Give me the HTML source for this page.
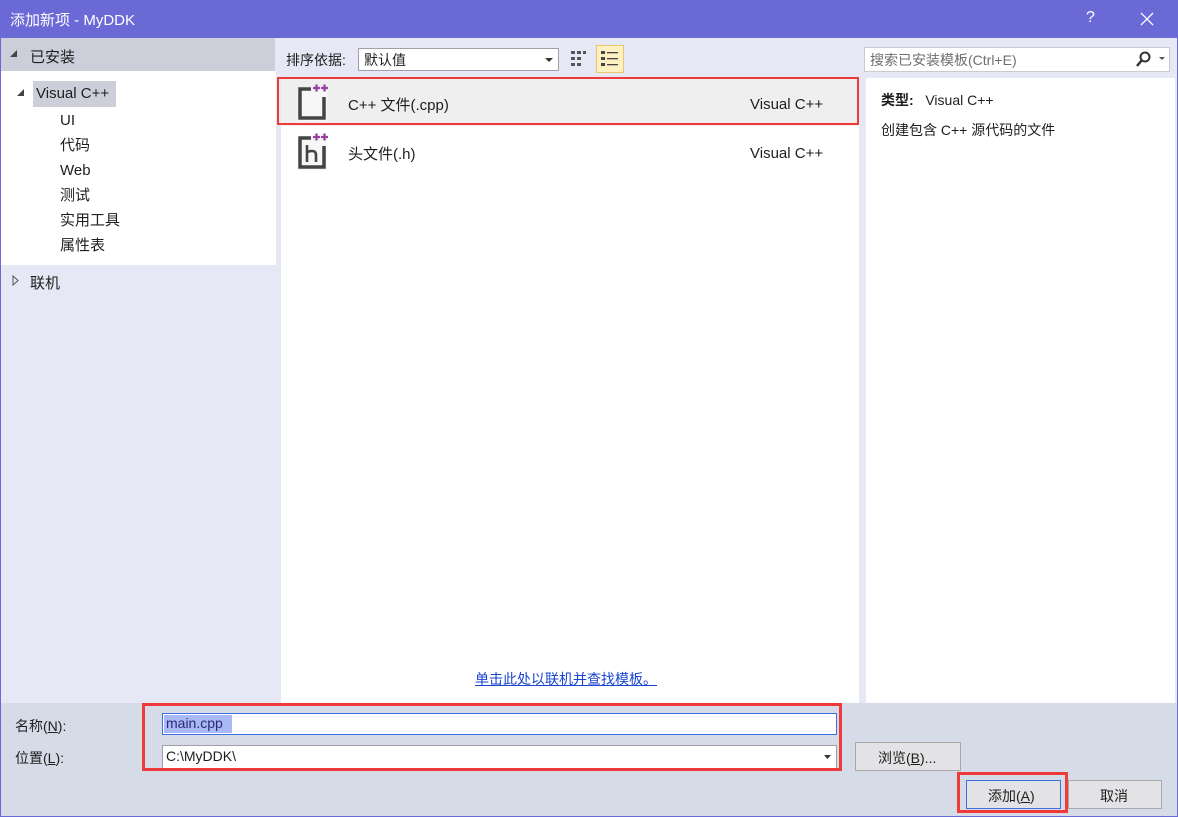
<!DOCTYPE html>
<html><head><meta charset="utf-8"><style>
*{margin:0;padding:0;box-sizing:border-box}
body{width:1178px;height:817px;position:relative;overflow:hidden;background:#e6e9f5;font-family:"Liberation Sans","Microsoft YaHei","Noto Sans CJK SC",sans-serif;font-size:14px;color:#1e1e1e}
.a{position:absolute}
.t{white-space:nowrap}
</style></head><body>
<div class="a" style="left:0;top:0;width:1178px;height:817px;border:1px solid #6b69d6;border-top:none"></div>
<div class="a" style="left:0;top:0;width:1178px;height:38px;background:#6b69d6"></div>
<div class="a t" style="left:10px;top:9px;color:#fff;font-size:15px">添加新项 - MyDDK</div>
<div class="a t" style="left:1086px;top:9px;color:#fff;font-size:16px">?</div>
<svg class="a" style="left:1140px;top:12px" width="14" height="14"><path d="M1 1L13 13M13 1L1 13" stroke="#fff" stroke-width="1.3"/></svg>

<div class="a" style="left:1px;top:38px;width:274px;height:33px;background:#ccced9"></div>
<svg class="a" style="left:10px;top:50px" width="8" height="8"><path d="M7 0L7 7L0 7Z" fill="#444"/></svg>
<div class="a t" style="left:30px;top:46px;font-size:15px">已安装</div>
<div class="a" style="left:1px;top:71px;width:275px;height:194px;background:#fff"></div>
<svg class="a" style="left:17px;top:89px" width="8" height="8"><path d="M7 0L7 7L0 7Z" fill="#444"/></svg>
<div class="a" style="left:33px;top:81px;width:83px;height:26px;background:#ccced9"></div>
<div class="a t" style="left:36px;top:85px;font-size:15px">Visual C++</div>
<div class="a t" style="left:60px;top:108px;font-size:15px;line-height:25px">UI<br>代码<br>Web<br>测试<br>实用工具<br>属性表</div>
<svg class="a" style="left:12px;top:275px" width="7" height="11"><path d="M1 1L6 5.5L1 10Z" fill="none" stroke="#555"/></svg>
<div class="a t" style="left:30px;top:272px;font-size:15px">联机</div>

<div class="a t" style="left:286px;top:50px">排序依据:</div>
<div class="a" style="left:358px;top:48px;width:201px;height:23px;background:#fff;border:1px solid #a0a0a8"></div>
<div class="a t" style="left:364px;top:50px">默认值</div>
<svg class="a" style="left:545px;top:58px" width="8" height="5"><path d="M0 0L8 0L4 4Z" fill="#333"/></svg>
<svg class="a" style="left:570px;top:50px" width="18" height="18"><g fill="#555"><rect x="1" y="1" width="4" height="3"/><rect x="7" y="1" width="4" height="3"/><rect x="13" y="1" width="3" height="3"/><rect x="1" y="7" width="4" height="3"/><rect x="7" y="7" width="4" height="3"/><rect x="1" y="13" width="4" height="3"/><rect x="7" y="13" width="4" height="3"/></g></svg>
<div class="a" style="left:596px;top:45px;width:28px;height:28px;background:#fdf0c2;border:1px solid #e8c96a"></div>
<svg class="a" style="left:600px;top:49px" width="20" height="20"><g fill="#444"><rect x="1" y="2" width="4" height="3"/><rect x="1" y="8" width="4" height="3"/><rect x="1" y="14" width="4" height="3"/><rect x="7" y="3" width="11" height="1.3"/><rect x="7" y="9" width="11" height="1.3"/><rect x="7" y="15" width="11" height="1.3"/></g></svg>

<div class="a" style="left:864px;top:47px;width:306px;height:25px;background:#fff;border:1px solid #c8cad4"></div>
<div class="a t" style="left:870px;top:50px;color:#6f6f6f">搜索已安装模板(Ctrl+E)</div>
<svg class="a" style="left:1136px;top:51px" width="30" height="16"><circle cx="9" cy="6" r="4.5" fill="none" stroke="#333" stroke-width="2"/><path d="M6 9L1 15" stroke="#333" stroke-width="2.5"/><path d="M23 6L29 6L26 9Z" fill="#555"/></svg>

<div class="a" style="left:281px;top:78px;width:578px;height:625px;background:#fff"></div>
<div class="a" style="left:281px;top:78px;width:578px;height:48px;background:#efefef"></div>
<div class="a" style="left:277px;top:77px;width:582px;height:48px;border:2px solid #ef3a3a"></div>
<svg class="a" style="left:295px;top:82px" width="36" height="40"><rect x="3" y="5" width="29" height="34" rx="2" fill="#f6f6f6"/><path d="M16 7H5V36H29V15" fill="none" stroke="#444" stroke-width="3.5"/><g stroke="#9a3f9e" stroke-width="2.3"><path d="M18 6H25M21.5 2.5V9.5M26 6H33M29.5 2.5V9.5"/></g></svg>
<div class="a t" style="left:348px;top:94px;font-size:15px">C++ 文件(.cpp)</div>
<div class="a t" style="left:750px;top:96px;font-size:15px">Visual C++</div>
<svg class="a" style="left:295px;top:131px" width="36" height="40"><rect x="3" y="5" width="29" height="34" rx="2" fill="#f6f6f6"/><path d="M16 7H5V36H29V15" fill="none" stroke="#444" stroke-width="3.5"/><path d="M12 14V31M12 22Q13 20 17 20Q21 20 21 24V31" fill="none" stroke="#444" stroke-width="2.6"/><g stroke="#9a3f9e" stroke-width="2.3"><path d="M18 6H25M21.5 2.5V9.5M26 6H33M29.5 2.5V9.5"/></g></svg>
<div class="a t" style="left:348px;top:143px;font-size:15px">头文件(.h)</div>
<div class="a t" style="left:750px;top:145px;font-size:15px">Visual C++</div>
<div class="a t" style="left:475px;top:669px;color:#1a45d0;text-decoration:underline">单击此处以联机并查找模板。</div>

<div class="a" style="left:866px;top:78px;width:309px;height:625px;background:#fff"></div>
<div class="a t" style="left:881px;top:90px"><b>类型:</b>&nbsp;&nbsp; Visual C++</div>
<div class="a t" style="left:881px;top:120px">创建包含 C++ 源代码的文件</div>

<div class="a" style="left:1px;top:703px;width:1176px;height:113px;background:#d6dbe8"></div>
<div class="a t" style="left:15px;top:716px">名称(<u>N</u>):</div>
<div class="a t" style="left:15px;top:748px">位置(<u>L</u>):</div>
<div class="a" style="left:162px;top:713px;width:675px;height:22px;background:#fff;border:1px solid #3d6fe0"></div>
<div class="a" style="left:164px;top:715px;width:68px;height:18px;background:#a8b8f2"></div>
<div class="a t" style="left:166px;top:715px;color:#2a2a7a">main.cpp</div>
<div class="a" style="left:162px;top:745px;width:675px;height:24px;background:#fff;border:1px solid #a0a0a8"></div>
<div class="a t" style="left:166px;top:748px">C:\MyDDK\</div>
<svg class="a" style="left:824px;top:755px" width="7" height="5"><path d="M0 0L7 0L3.5 4Z" fill="#333"/></svg>
<div class="a" style="left:142px;top:703px;width:700px;height:68px;border:3px solid #ef3a3a"></div>
<div class="a" style="left:855px;top:742px;width:106px;height:29px;background:#e3e3e6;border:1px solid #a8a8ac"></div>
<div class="a t" style="left:878px;top:748px">浏览(<u>B</u>)...</div>
<div class="a" style="left:966px;top:780px;width:95px;height:29px;background:#e3e3e6;border:1px solid #3d6fe0"></div>
<div class="a t" style="left:988px;top:786px">添加(<u>A</u>)</div>
<div class="a" style="left:957px;top:772px;width:111px;height:41px;border:3px solid #ef3a3a"></div>
<div class="a" style="left:1068px;top:780px;width:94px;height:29px;background:#e3e3e6;border:1px solid #a8a8ac"></div>
<div class="a t" style="left:1100px;top:786px">取消</div>
</body></html>
